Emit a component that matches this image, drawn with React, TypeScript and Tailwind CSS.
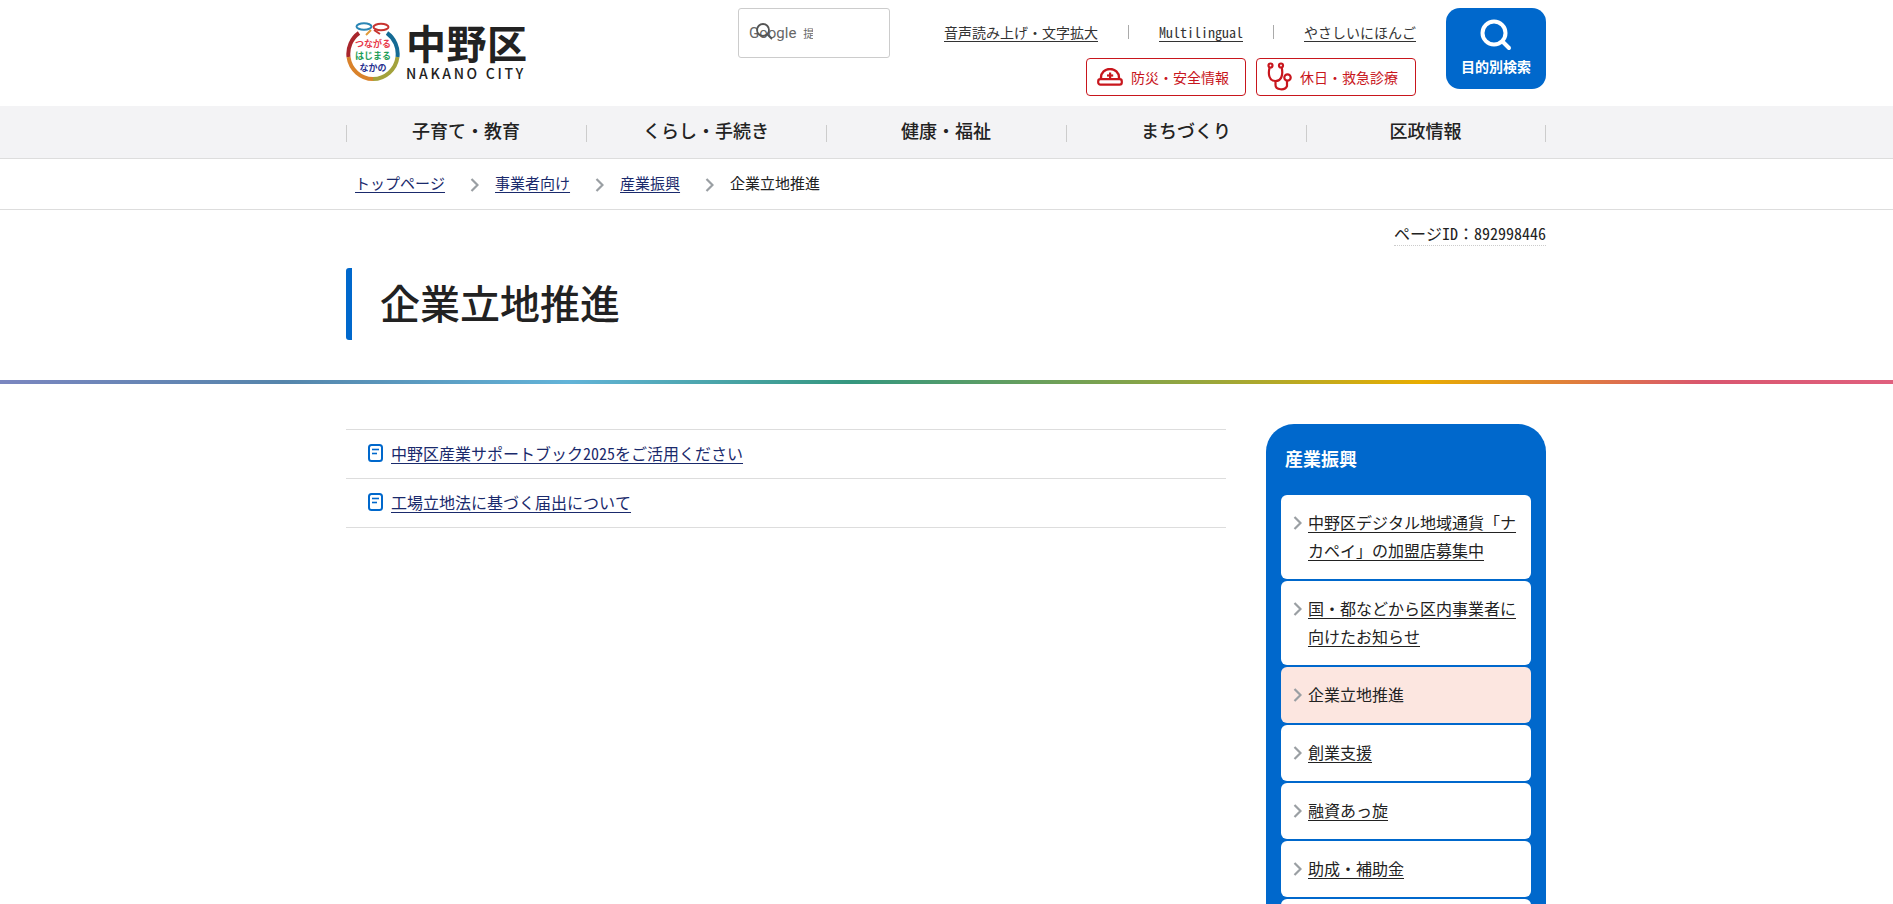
const FONT = "font-['Noto_Sans_CJK_JP','Noto_Sans',sans-serif]";
const MONO = "font-['Noto_Sans_Mono_CJK_JP','Noto_Sans_CJK_JP','DejaVu_Sans_Mono',monospace]";

const navItems = ["子育て・教育", "くらし・手続き", "健康・福祉", "まちづくり", "区政情報"];

const sideItems = [
  { label: "中野区デジタル地域通貨「ナカペイ」の加盟店募集中" },
  { label: "国・都などから区内事業者に向けたお知らせ" },
  { label: "企業立地推進", current: true },
  { label: "創業支援" },
  { label: "融資あっ旋" },
  { label: "助成・補助金" },
];

function Chevron({ className }: { className?: string }) {
  return (
    <svg width="9" height="14" viewBox="0 0 9 14" fill="none" stroke="#9a9fa3" strokeWidth="2.2" className={className}>
      <path d="M1.5 1 L7.5 7 L1.5 13" />
    </svg>
  );
}

function Logo() {
  return (
    <div className="flex items-center gap-[6px] w-[182px]">
      <svg width="54" height="60" viewBox="0 0 54 60" className="shrink-0">
        <path d="M13 12 A25 25.5 0 0 0 2.5 36" fill="none" stroke="#a8262c" strokeWidth="4" />
        <path d="M2.5 36 A25 25.5 0 0 0 27 58" fill="none" stroke="#d9822b" strokeWidth="4" />
        <path d="M27 58 A25 25.5 0 0 0 51.5 36" fill="none" stroke="#a3a23c" strokeWidth="4" />
        <path d="M51.5 36 A25 25.5 0 0 0 41 12" fill="none" stroke="#146a94" strokeWidth="4" />
        <ellipse cx="18" cy="5.5" rx="7.5" ry="3.2" fill="none" stroke="#2a86b5" strokeWidth="2" />
        <ellipse cx="35" cy="6" rx="7.5" ry="3.2" fill="none" stroke="#c8342f" strokeWidth="2" />
        <path d="M25 9 L20 14" stroke="#e09a3a" strokeWidth="2" />
        <path d="M28 9 L34 13" stroke="#c8342f" strokeWidth="2" />
        <text x="27" y="26" textAnchor="middle" fontSize="9" fontWeight="700" fill="#e8384a">つながる</text>
        <text x="27" y="38" textAnchor="middle" fontSize="9" fontWeight="700" fill="#1f9e58">はじまる</text>
        <text x="27" y="50" textAnchor="middle" fontSize="9" fontWeight="700" fill="#27308f">なかの</text>
      </svg>
      <div className="flex flex-col items-start text-[#222] whitespace-nowrap">
        <div className="text-[40px] leading-[42px] font-bold tracking-[0.5px]">中野区</div>
        <div className="text-[14px] leading-[16px] mt-[2px] tracking-[2.7px] font-medium">NAKANO CITY</div>
      </div>
    </div>
  );
}

function SearchBox() {
  return (
    <div className="w-[152px] h-[50px] border border-[#ccc] rounded-[3px] flex items-center pl-[10px] overflow-hidden">
      <div className="relative flex items-center w-[64px] h-[24px] overflow-hidden whitespace-nowrap text-[#666]">
        <span className="text-[15px] font-['Roboto',sans-serif] leading-none">Google</span>
        <span className="text-[11px] ml-[7px]">提供</span>
        <svg width="22" height="22" viewBox="0 0 22 22" className="absolute left-[5px] top-0" fill="none" stroke="#555" strokeWidth="1.8">
          <circle cx="9" cy="9" r="6" />
          <line x1="13.5" y1="13.5" x2="18" y2="18" />
        </svg>
      </div>
    </div>
  );
}

function Helmet() {
  return (
    <svg width="26" height="18" viewBox="0 0 26 18" fill="none" className="shrink-0">
      <path d="M4 11 V9.5 A9 8.5 0 0 1 22 9.5 V11" stroke="#c8161d" strokeWidth="2.4" />
      <rect x="1.2" y="11.2" width="23.6" height="5.4" rx="2.2" stroke="#c8161d" strokeWidth="2.2" />
      <rect x="12" y="4.5" width="2.2" height="6" fill="#c8161d" />
      <rect x="10" y="6.4" width="6.2" height="2.2" fill="#c8161d" />
    </svg>
  );
}

function Stethoscope() {
  return (
    <svg width="26" height="30" viewBox="0 0 26 30" fill="none" stroke="#c8161d" strokeWidth="2.2" strokeLinecap="round" className="shrink-0">
      <circle cx="3.5" cy="3.5" r="2" />
      <circle cx="14" cy="3.5" r="2" />
      <path d="M2.5 6 C1 12 2 19 8.5 19 C15 19 16 12 14.8 6" />
      <path d="M8.5 19 V23 C8.5 28 18 29 20 24 V19" />
      <circle cx="20.5" cy="15.5" r="3.2" />
    </svg>
  );
}

function TopLinks() {
  return (
    <div className={`flex items-center text-[14px] text-[#333] leading-[20px] h-[24px] mt-[20px] ${MONO}`}>
      <a className="underline underline-offset-[3px]">音声読み上げ・文字拡大</a>
      <span className="w-px h-[14px] bg-[#aaa] mx-[30px]" />
      <a className="underline underline-offset-[3px]">Multilingual</a>
      <span className="w-px h-[14px] bg-[#aaa] mx-[30px]" />
      <a className="underline underline-offset-[3px]">やさしいにほんご</a>
    </div>
  );
}

function Header() {
  return (
    <header className="w-[1200px] ml-[346px] h-[106px] flex">
      <div className="pt-[21px]">
        <Logo />
      </div>
      <div className="ml-[210px] pt-[8px]">
        <SearchBox />
      </div>
      <div className="ml-auto flex flex-col items-end">
        <TopLinks />
        <div className="flex gap-[10px] mt-[14px]">
          <a className="w-[160px] h-[38px] border border-[#c8161d] rounded-[4px] flex items-center pl-[10px] gap-[8px] text-[14px] text-[#c8161d]">
            <Helmet />
            防災・安全情報
          </a>
          <a className="w-[160px] h-[38px] border border-[#c8161d] rounded-[4px] flex items-center pl-[10px] gap-[7px] text-[14px] text-[#c8161d]">
            <Stethoscope />
            休日・救急診療
          </a>
        </div>
      </div>
      <a className="ml-[30px] mt-[8px] w-[100px] h-[81px] rounded-[14px] bg-[#0068cc] text-white flex flex-col items-center pt-[10px]">
        <svg width="36" height="36" viewBox="0 0 36 36" fill="none" stroke="#fff" strokeWidth="4" strokeLinecap="round">
          <circle cx="16" cy="15" r="11.5" />
          <line x1="25" y1="24" x2="31" y2="30" />
        </svg>
        <span className="text-[14px] font-bold leading-[20px] mt-[2px]">目的別検索</span>
      </a>
    </header>
  );
}

function GlobalNav() {
  return (
    <nav className="bg-[#f3f3f5] border-b border-[#ddd] h-[53px]">
      <ul className="w-[1200px] ml-[346px] h-full grid grid-cols-5 items-center">
        {navItems.map((item, i) => (
          <li
            key={item}
            className={`h-[17px] mt-[3px] pr-[1px] flex items-center justify-center border-l border-[#ccc] text-[18px] font-medium text-[#222] ${i === 4 ? "border-r" : ""}`}
          >
            <span className="mb-[7px]">{item}</span>
          </li>
        ))}
      </ul>
    </nav>
  );
}

function Breadcrumb() {
  const links = ["トップページ", "事業者向け", "産業振興"];
  return (
    <div className="border-b border-[#ddd] h-[51px]">
      <div className={`w-[1200px] ml-[346px] h-full flex items-center pl-[9px] pb-[2px] text-[15px] text-[#222] ${MONO}`}>
        {links.map((l) => (
          <span key={l} className="flex items-center">
            <a className="underline underline-offset-[3px] text-[#1a2a6c]">{l}</a>
            <Chevron className="ml-[25px] mr-[16px] mt-[3px]" />
          </span>
        ))}
        <span>企業立地推進</span>
      </div>
    </div>
  );
}

function DocIcon() {
  return (
    <svg width="15" height="18" viewBox="0 0 15 18" fill="none" className="shrink-0">
      <rect x="1" y="1" width="13" height="16" rx="2.5" stroke="#0068cc" strokeWidth="2" />
      <line x1="4" y1="5.5" x2="11" y2="5.5" stroke="#0068cc" strokeWidth="1.6" />
      <line x1="4" y1="9.5" x2="9" y2="9.5" stroke="#0068cc" strokeWidth="1.6" />
    </svg>
  );
}

function ContentList() {
  const items = ["中野区産業サポートブック2025をご活用ください", "工場立地法に基づく届出について"];
  return (
    <ul className="w-[880px] mt-[5px] self-start border-t border-[#ddd]">
      {items.map((t) => (
        <li key={t} className="h-[49px] pb-[2px] border-b border-[#ddd] flex items-center pl-[22px] gap-[8px]">
          <DocIcon />
          <a className={`text-[16px] text-[#1a2a6c] underline underline-offset-[3px] ${MONO}`}>{t}</a>
        </li>
      ))}
    </ul>
  );
}

function Sidebar() {
  return (
    <aside className="w-[280px] bg-[#0068cc] rounded-t-[28px] pt-[20px] px-[15px] pb-[20px]">
      <div className="text-[18px] font-bold text-white leading-[28px] px-[4px]">産業振興</div>
      <ul className="mt-[23px] flex flex-col gap-[2px]">
        {sideItems.map((s) => (
          <li
            key={s.label}
            className={`rounded-[6px] flex pl-[12px] pr-[10px] pt-[13px] pb-[15px] gap-[6px] ${s.current ? "bg-[#fce6e0]" : "bg-white"}`}
          >
            <Chevron className="shrink-0 mt-[8px]" />
            <span className={`text-[16px] leading-[28px] text-[#222] ${MONO} ${s.current ? "" : "underline underline-offset-[3px]"}`}>
              {s.label}
            </span>
          </li>
        ))}
        <li className="rounded-[6px] h-[56px] bg-white" />
      </ul>
    </aside>
  );
}

export default function App() {
  return (
    <div className={`h-[904px] overflow-hidden bg-white ${FONT}`}>
      <Header />
      <GlobalNav />
      <Breadcrumb />
      <div className="w-[1200px] ml-[346px]">
        <div className="flex justify-end pt-[11px]">
          <span className={`text-[16px] leading-[24px] text-[#222] border-b border-dotted border-[#ccc] ${MONO}`}>ページID：892998446</span>
        </div>
        <div className="mt-[22px] h-[72px] border-l-[6px] border-[#0068cc] rounded-[3px] pl-[28px] pb-[4px] flex items-center">
          <h1 className="text-[40px] font-medium text-[#222] leading-[56px]">企業立地推進</h1>
        </div>
      </div>
      <div className="mt-[40px] h-[4px] bg-[linear-gradient(90deg,#7b86c0_0%,#5585ab_15%,#62b3d8_30%,#35977f_45%,#94a63f_63%,#e8ad00_75%,#d9566f_90%,#e0607e_100%)]" />
      <div className="w-[1200px] ml-[346px] flex justify-between pt-[40px]">
        <ContentList />
        <Sidebar />
      </div>
    </div>
  );
}
